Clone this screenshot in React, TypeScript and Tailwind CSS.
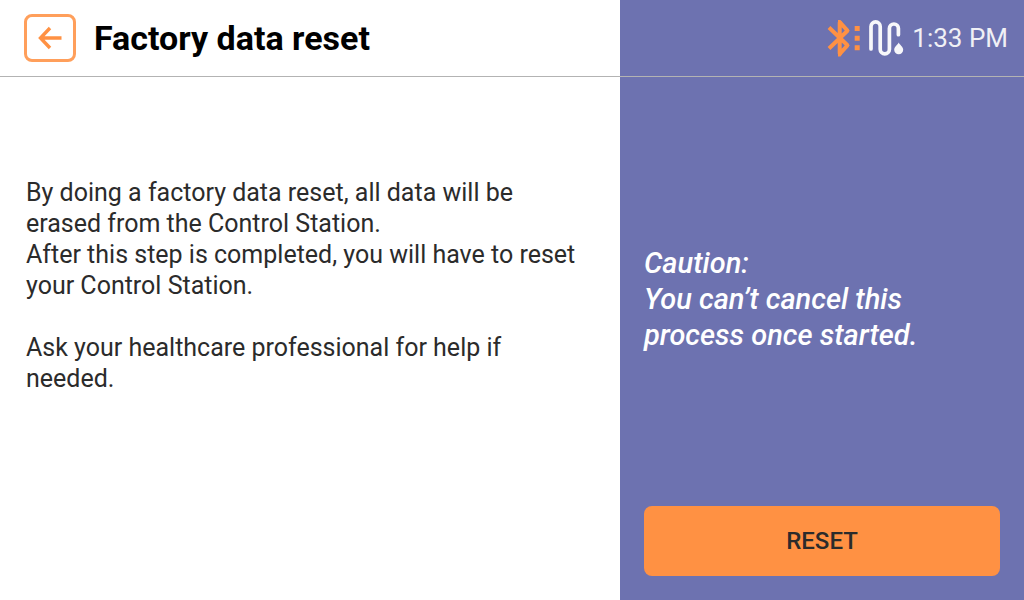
import React from "react";

function BluetoothIcon() {
  return (
    <svg className="h-10 w-9 shrink-0" viewBox="0 0 36 40" fill="none" role="img" aria-label="Bluetooth connected">
      <path
        d="M3 9.500 21.500 27.300 13.700 35.800V4.200L21.500 12.700 3 30.500"
        stroke="#ff9143"
        strokeWidth="4"
        strokeLinejoin="bevel"
      />
      <path d="M12 2h2.500l2 3h-4.500zM12 38.500h2.500l2-3h-4.500zM20 10.500 24 12.700 20 15.500zM20 24.500 24 27.300 20 29.500z" fill="#ff9143" />
      <path d="M28.700 8h5v5h-5zM28.700 17.800h5v5h-5zM28.700 27.200h5v5h-5z" fill="#ff9143" />
    </svg>
  );
}

function TubingIcon() {
  return (
    <svg className="h-10 w-9 shrink-0" viewBox="0 0 36 40" fill="none" role="img" aria-label="Infusion tubing">
      <path
        d="M3 31V8.500a4.600 4.600 0 0 1 9.200 0V31.200a4.600 4.600 0 0 0 9.200 0V10.500a4.500 4.500 0 0 1 9 0V16.700"
        stroke="#f7f7fa"
        strokeWidth="3.700"
        strokeLinecap="round"
      />
      <path d="M30.700 24.500C31.800 27 35.200 28.800 35.200 31.700a4.500 4.500 0 0 1-9 0C26.200 28.800 29.600 27 30.700 24.500Z" fill="#f7f7fa" />
    </svg>
  );
}

export default function App() {
  return (
    <div className="grid min-h-screen grid-cols-[minmax(0,1fr)_404px] grid-rows-[auto_1fr] bg-white font-['Roboto','Liberation_Sans',sans-serif]">
      <header className="flex h-[77px] items-center gap-[18px] border-b border-[#b3b3b3] pl-6">
        <button
          type="button"
          aria-label="Back"
          className="flex h-12 w-[52px] items-center justify-center rounded-lg border-[3px] border-[#ff9f5b] bg-white"
        >
          <svg className="h-6 w-6" viewBox="0 0 24 24" fill="none" stroke="#ff9143" strokeWidth="3.400">
            <path d="M23.500 12H2.500M12 2 2.500 12 12 22" />
          </svg>
        </button>
        <h1 className="text-[34px] leading-10 font-bold text-black">Factory data reset</h1>
      </header>

      <div className="flex h-[77px] items-center justify-end gap-[6px] border-b border-[#b3b3b3] bg-[#6d72b0] pr-4">
        <BluetoothIcon />
        <TubingIcon />
        <time className="ml-0.5 text-[26px] leading-10 text-[#f0f0f5]">1:33 PM</time>
      </div>

      <main className="px-[26px] pt-[100px] text-[25px] leading-[31px] text-[#2b2b2b]">
        <p>
          By doing a factory data reset, all data will be
          <br />
          erased from the Control Station.
        </p>
        <p>
          After this step is completed, you will have to reset
          <br />
          your Control Station.
        </p>
        <p className="mt-[31px]">
          Ask your healthcare professional for help if
          <br />
          needed.
        </p>
      </main>

      <aside className="flex flex-col justify-between bg-[#6d72b0] px-6 pb-6">
        <p className="pt-[168px] text-[29px] leading-9 font-medium text-white italic">
          Caution:
          <br />
          You can’t cancel this
          <br />
          process once started.
        </p>
        <button type="button" className="h-[70px] rounded-lg bg-[#ff9143] text-[24px] font-medium text-[#2b2b2b]">
          RESET
        </button>
      </aside>
    </div>
  );
}
